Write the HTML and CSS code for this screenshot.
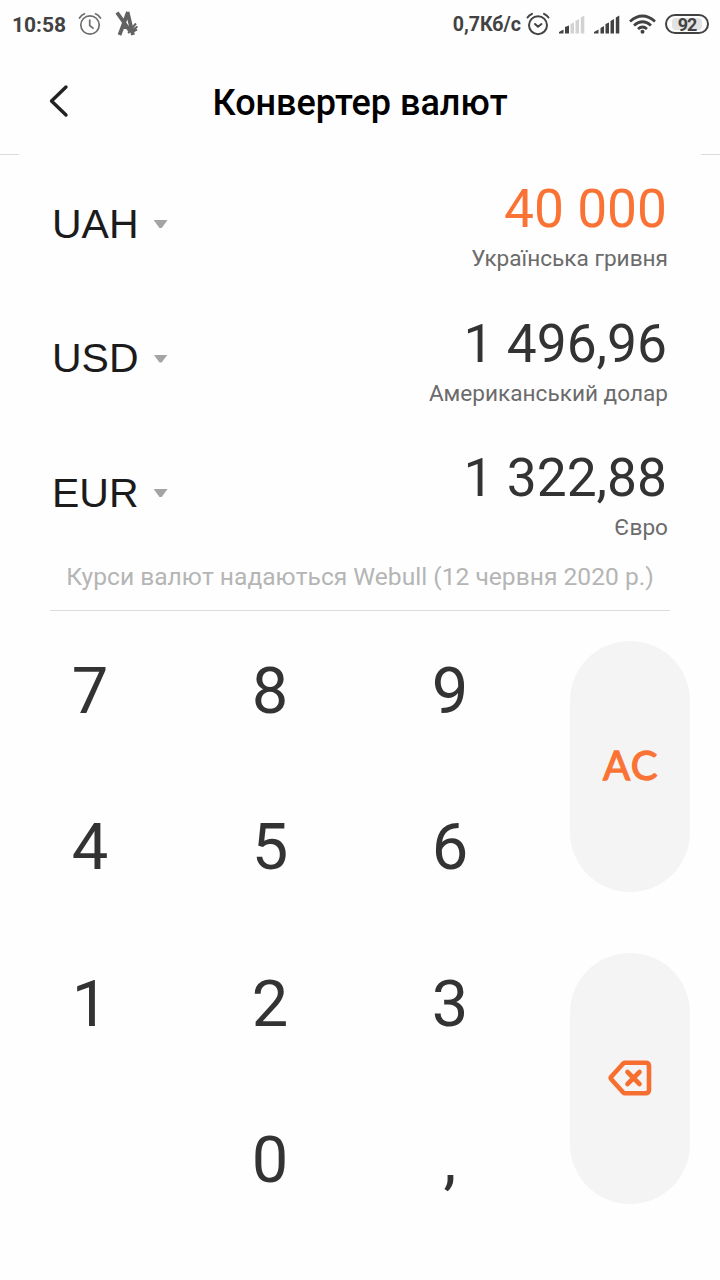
FILE: index.html
```html
<!DOCTYPE html>
<html lang="uk">
<head>
<meta charset="utf-8">
<title>Конвертер валют</title>
<link rel="stylesheet" href="styles.css">
</head>
<body>
<div class="screen">
  <div class="status">
    <span class="time">10:58</span>
    <svg class="ic-alarm-left" width="24" height="24" viewBox="0 0 24 24" fill="none" stroke="#6e6e6e" stroke-width="1.7" stroke-linecap="round"><circle cx="12" cy="13" r="9.2"/><path d="M1.500 6Q3.500 3 6.500 1.800M17.500 1.800Q20.500 3 22.500 6M11.700 8V13.500L15 16.200"/></svg>
    <svg class="ic-app" width="24" height="26" viewBox="0 0 24 26" fill="none" stroke="#626262"><path d="M2 1.500L15 20M13 1L4.500 24M12.500 1L18 24" stroke-width="3.800"/><path d="M9 17H17L21 12.500M13 22L22.500 15.500M17 21L22 18.500" stroke-width="2"/></svg>
    <span class="spacer"></span>
    <span class="speed">0,7Кб/с</span>
    <svg class="ic-alarm" width="24" height="24" viewBox="0 0 24 24" fill="none" stroke="#424242" stroke-width="2" stroke-linecap="round"><circle cx="12" cy="13.200" r="9"/><path d="M1.500 5.500Q3 3.200 6 1.800M18 1.800Q21 3.200 22.500 5.500M9 12L12 14.800L15.500 12"/></svg>
    <svg class="ic-signal" width="26" height="19" viewBox="0 0 26 19" fill="#424242"><path d="M0 18.500V17L4.500 14.500V18.500ZM6 12L10 10.500V18.500H6Z"/><path fill="#d2d2d2" d="M11.500 9L15 7.500V18.500H11.500ZM16.500 6L20 4V18.500H16.500ZM21.800 2.500L25.300 .5V18.500H21.800Z"/></svg>
    <svg class="ic-signal2" width="26" height="19" viewBox="0 0 26 19" fill="#424242"><path d="M0 18.500V17L4.500 14.500V18.500ZM6.500 13L10 11V18.500H6.500ZM11.500 9L15 7.500V18.500H11.500ZM16.500 6L20 4V18.500H16.500ZM21.800 2.500L25.300 .5V18.500H21.800Z"/></svg>
    <svg class="ic-wifi" width="27" height="20" viewBox="0 0 27 20" fill="none" stroke="#424242" stroke-width="2.800"><path d="M1 7.500Q13.500-3.500 26 7.500M5 11.500Q13.500 4 22 11.500M9 15Q13.500 11 18 15"/><circle cx="13.500" cy="17.700" r="2" fill="#424242" stroke="none"/></svg>
    <span class="battery"><span class="level">92</span></span>
  </div>

  <header class="title-bar">
    <svg class="back" width="22" height="34" viewBox="0 0 22 34" fill="none" stroke="#222" stroke-width="3.400" stroke-linecap="round" stroke-linejoin="round"><path d="M18 3L3.500 17L18 31"/></svg>
    <h1 class="title">Конвертер валют</h1>
  </header>
  <div class="edge-rules"><span></span><span></span></div>

  <main class="rates">
    <section class="rate">
      <div class="code">UAH<i class="caret"></i></div>
      <div class="value"><div class="amount active">40 000</div><div class="name">Українська гривня</div></div>
    </section>
    <section class="rate">
      <div class="code">USD<i class="caret"></i></div>
      <div class="value"><div class="amount">1 496,96</div><div class="name">Американський долар</div></div>
    </section>
    <section class="rate">
      <div class="code">EUR<i class="caret"></i></div>
      <div class="value"><div class="amount">1 322,88</div><div class="name">Євро</div></div>
    </section>
  </main>
  <div class="source">Курси валют надаються Webull (12 червня 2020 р.)</div>

  <div class="keypad">
    <div class="key">7</div><div class="key">8</div><div class="key">9</div>
    <div class="pill clear"><span>AC</span></div>
    <div class="key">4</div><div class="key">5</div><div class="key">6</div>
    <div class="key">1</div><div class="key">2</div><div class="key">3</div>
    <div class="pill erase"><svg width="44" height="36" viewBox="0 0 44 36" fill="none" stroke="#f76f30" stroke-linejoin="round" stroke-linecap="round"><path d="M16.500 2.800H37.500Q41 2.800 41 6.300V29.700Q41 33.200 37.500 33.200H16.500L15 32.300L3.500 19.500Q2 18 3.500 16.500L15 3.700Z" stroke-width="4.600"/><path d="M19.500 12L31.500 24M31.500 12L19.500 24" stroke-width="4.600"/></svg></div>
    <div class="key blank"></div><div class="key">0</div><div class="key">,</div>
  </div>
</div>
</body>
</html>
```
FILE: styles.css
```css
* { box-sizing: border-box; }
body { margin: 0; background: #fefefe; font-family: Roboto, "Noto Sans", sans-serif; }
.screen { width: 720px; height: 1280px; display: flex; flex-direction: column; overflow: hidden; }

.status { height: 48px; display: flex; align-items: center; padding: 0 11px 0 12px; color: #424242; font-weight: 700; }
.status svg { flex: none; }
.time { font-size: 21px; width: 54px; white-space: nowrap; padding-top: 1px; }
.ic-alarm-left { margin-left: 12px; }
.ic-app { margin-left: 13px; }
.spacer { flex: 1; }
.speed { font-size: 19.600px; white-space: nowrap; padding-top: 1px; }
.ic-alarm { margin-left: 5px; }
.ic-signal { margin-left: 9px; }
.ic-signal2 { margin-left: 9px; }
.ic-wifi { margin-left: 9px; }
.battery { width: 44px; height: 20px; margin-left: 9px; border: 2px solid #424242; border-radius: 10px; padding: 2px 5px; }
.level { display: block; height: 12px; line-height: 13px; background: #e2e2e2; border-radius: 4px; text-align: center; font-size: 18px; letter-spacing: -1px; }

.title-bar { height: 106px; display: grid; grid-template-columns: 100px 1fr 100px; align-items: center; padding-top: 2px; }
.back { margin-left: 48px; margin-top: -3px; }
.title { margin: 0; padding-top: 2px; text-align: center; font-size: 36px; line-height: 44px; font-weight: 500; color: #000; white-space: nowrap; }
.edge-rules { display: flex; justify-content: space-between; height: 1px; }
.edge-rules span { width: 19px; background: #dcdcdc; }

.rates { padding: 0 53px 0 52px; }
.rate { height: 134.500px; display: flex; justify-content: space-between; padding-top: 22px; }
.code { display: flex; align-items: center; height: 94px; font-family: "Liberation Sans", sans-serif; font-size: 41px; color: #1b1b1b; }
.caret { margin-left: 15px; width: 14px; height: 8px; background: #a4a4a4; clip-path: polygon(0 0, 100% 0, 58% 100%, 42% 100%); }
.value { text-align: right; }
.amount { font-size: 53.300px; line-height: 64px; color: #333; white-space: nowrap; }
.amount.active { color: #fa7335; }
.name { margin-right: -1px; font-size: 22.600px; line-height: 36px; color: #6b6b6b; white-space: nowrap; }
.source { height: 52px; margin: 0 50px; padding-top: 3px; border-bottom: 1px solid #dcdcdc; text-align: center; font-size: 24.600px; line-height: 30px; color: #b5b5b5; white-space: nowrap; }

.keypad { display: grid; grid-template-columns: repeat(4, 180px); grid-template-rows: repeat(4, 156.500px); }
.key { display: flex; align-items: center; justify-content: center; padding-top: 4px; font-size: 65px; color: #333; }
.pill { grid-column: 4; grid-row: span 2; width: 120px; height: 251px; place-self: center; border-radius: 60px; background: #f4f4f4; display: flex; align-items: center; justify-content: center; }
.clear { grid-row: 1 / span 2; margin-bottom: 2px; padding: 0 0 2px 2px; font-family: Lato, sans-serif; font-size: 40px; letter-spacing: 1.500px; color: #fa7335; -webkit-text-stroke: 1.300px #fa7335; }
.erase { grid-row: 3 / span 2; margin-bottom: 4px; }
```
